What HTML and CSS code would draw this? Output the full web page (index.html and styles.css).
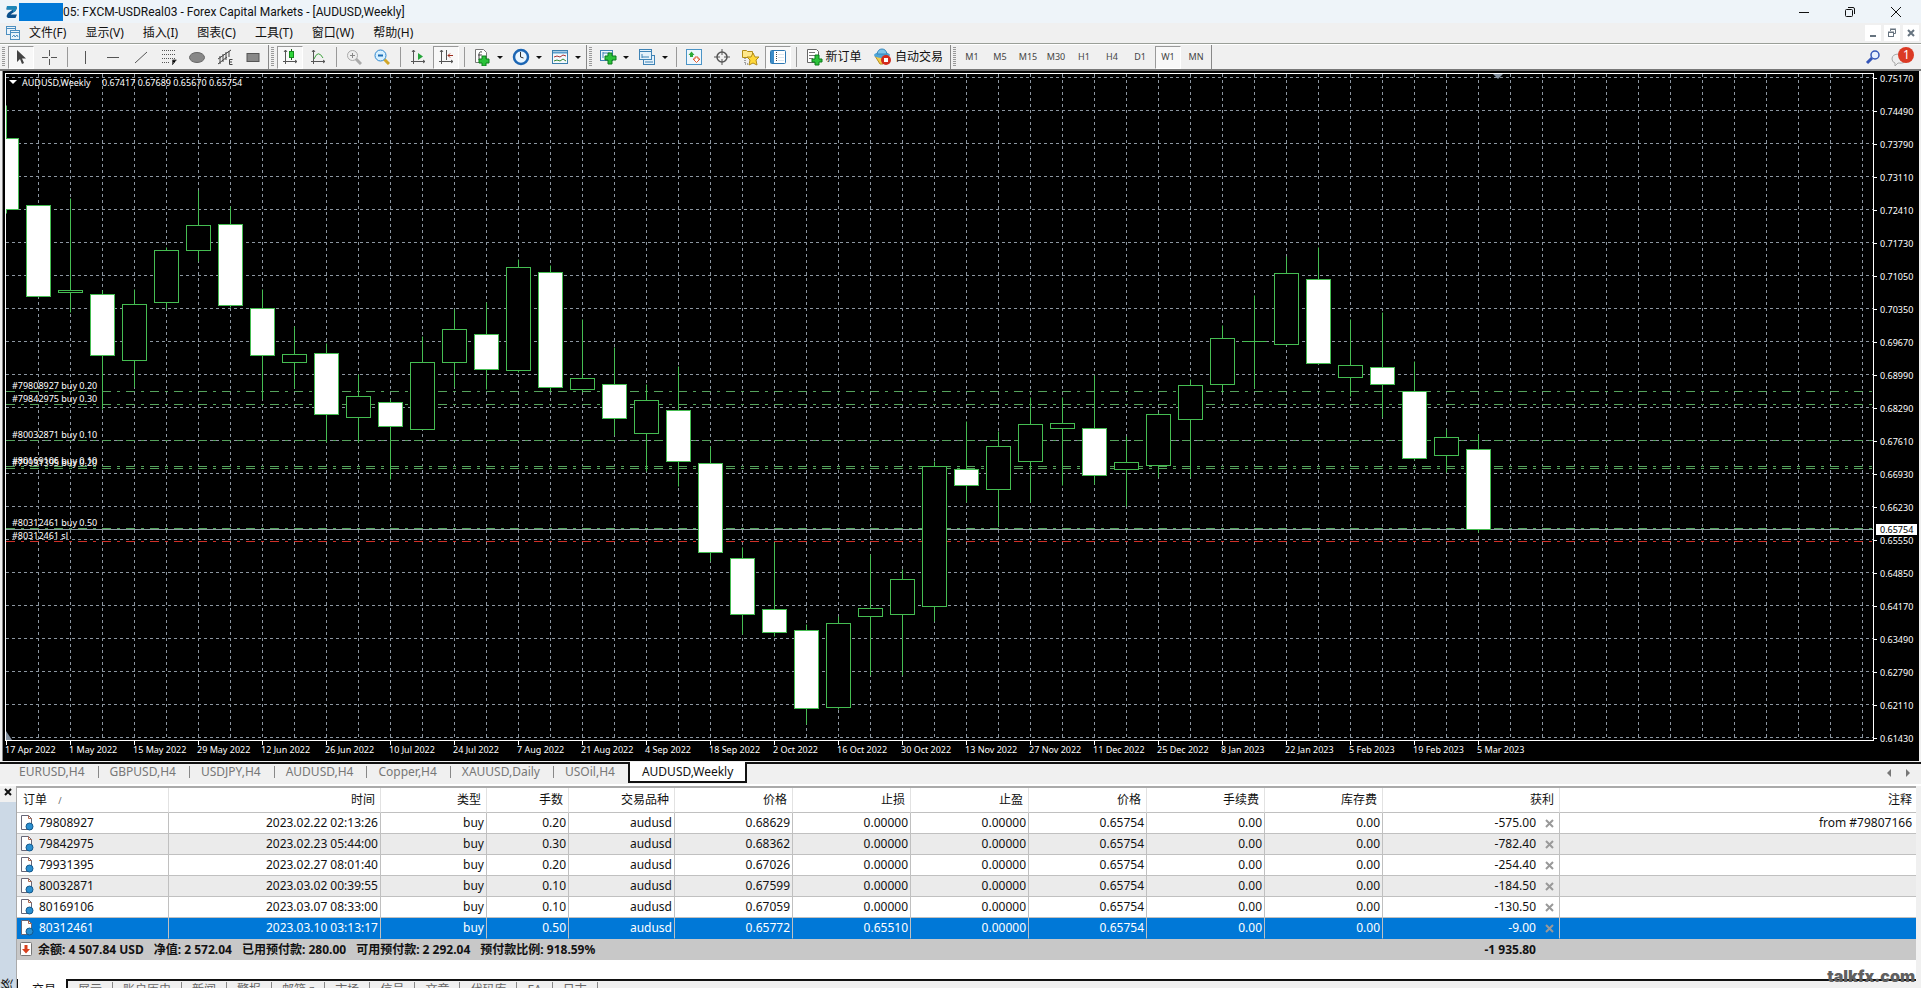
FILE: index.html
```html
<!DOCTYPE html>
<html lang="zh-CN">
<head>
<meta charset="utf-8">
<title>05: FXCM-USDReal03 - Forex Capital Markets - [AUDUSD,Weekly]</title>
<link rel="stylesheet" href="styles.css">
</head>
<body>
<header class="titlebar">
  <svg class="logo" width="12" height="14" viewBox="0 0 12 14"><path d="M1 1h8.500q1.800.3 1.300 2.400L9.500 6 4.500 9.500H11L9.500 13H2Q0 12.500.8 10.300L2 8 7 4.500H.5z" fill="#0b4f8c"/><path d="M1 1h8.500q1.800.3 1.300 2.400L9.500 6 7 7.500V4.500H.5z" fill="#1d86b8"/></svg>
  <span class="redacted"></span>
  <h1 class="title">05: FXCM-USDReal03 - Forex Capital Markets - [AUDUSD,Weekly]</h1>
  <div class="wincontrols">
    <button aria-label="最小化"><svg width="12" height="12"><path d="M1 6.500h10" stroke="#111"/></svg></button>
    <button aria-label="还原"><svg width="12" height="12" fill="none" stroke="#111"><rect x="1.500" y="3.500" width="7" height="7" rx="1"/><path d="M4 1.500h5q1.500 0 1.500 1.500v5"/></svg></button>
    <button aria-label="关闭"><svg width="12" height="12" stroke="#111"><path d="M1 1l10 10M11 1L1 11"/></svg></button>
  </div>
</header>

<nav class="menubar">
  <svg class="menuicon" width="14" height="14" fill="#eaf4fb" stroke="#4d8fc0"><rect x=".5" y=".5" width="9" height="8"/><path d="M1 2.500h8"/><rect x="4.500" y="4.500" width="9" height="9"/><path d="M5 6.500h8M6 11l2-2 1 2 2-2 1 2" fill="none"/></svg>
  <button>文件(F)</button><button>显示(V)</button><button>插入(I)</button><button>图表(C)</button><button>工具(T)</button><button>窗口(W)</button><button>帮助(H)</button>
  <div class="mdi">
    <button aria-label="最小化图表"><svg width="10" height="10"><path d="M2 8h6" stroke="#66737f" stroke-width="2"/></svg></button>
    <button aria-label="还原图表"><svg width="10" height="10" fill="none" stroke="#66737f"><path d="M3.500 3V1.500h5v4H7M3 1h6" /><rect x="1.500" y="4.500" width="5" height="4"/><path d="M1 4h6"/></svg></button>
    <button aria-label="关闭图表"><svg width="10" height="10" stroke="#66737f" stroke-width="2"><path d="M2 2l6 6M8 2L2 8"/></svg></button>
  </div>
</nav>

<div class="toolbar">
  <i class="grip"></i>
  <button class="tool on" aria-label="光标"><svg width="16" height="16"><path d="M4 1v12l3-3 2 5 2-1-2-4.500h4z" fill="#444"/></svg></button>
  <button class="tool" aria-label="十字线"><svg width="16" height="16"><path d="M8.500 1v6M8.500 10v6M1 8.500h6M10 8.500h6" stroke="#555"/></svg></button>
  <i class="sep"></i>
  <button class="tool" aria-label="垂直线"><svg width="16" height="16"><path d="M8.500 2v13" stroke="#555"/></svg></button>
  <button class="tool" aria-label="水平线"><svg width="16" height="16"><path d="M2 8.500h12" stroke="#555"/></svg></button>
  <button class="tool" aria-label="趋势线"><svg width="16" height="16"><path d="M2 14L14 3" stroke="#555"/></svg></button>
  <button class="tool" aria-label="斐波纳契"><svg width="16" height="16" stroke="#555"><path d="M1 1.500h14M1 5.500h14M1 9.500h14M1 13.500h8" stroke-dasharray="1 1"/><path d="M11.500 16v-5h4M11 13.500h3"/></svg></button>
  <button class="tool" aria-label="椭圆"><svg width="16" height="16"><ellipse cx="8" cy="8.500" rx="7.500" ry="5" fill="#888" stroke="#666"/></svg></button>
  <button class="tool" aria-label="通道"><svg width="16" height="16" stroke="#444" fill="none"><path d="M1 10L14 1M1 15l9-7M3 7v8M6 5v8M9 3v8M12 2v6M15.500 10.500h-3v5h3M13 13h2"/></svg></button>
  <button class="tool" aria-label="矩形"><svg width="16" height="16"><rect x="2" y="4.500" width="12" height="8" fill="#888" stroke="#555"/></svg></button>
  <i class="bar"></i><i class="grip"></i>
  <button class="tool on" aria-label="蜡烛图"><svg width="16" height="16"><path d="M3.500 1v14M1 12.500h14M2 3l1.500-2L5 3M13 11l2 1.500-2 1.500" stroke="#555" fill="none"/><path d="M9.500 0v11" stroke="#165c16"/><rect x="7.500" y="2.500" width="4" height="6" fill="#2fd43a" stroke="#138a1b"/></svg></button>
  <button class="tool" aria-label="折线图"><svg width="16" height="16" fill="none"><path d="M3.500 1v14M1 12.500h14M2 3l1.500-2L5 3M13 11l2 1.500-2 1.500" stroke="#555"/><path d="M4 10Q8 0 13 9" stroke="#3da33d"/></svg></button>
  <i class="sep"></i>
  <button class="tool" aria-label="放大"><svg width="16" height="16" fill="none"><path d="M10 10l5 5" stroke="#aaa" stroke-width="3"/><circle cx="6.500" cy="6.500" r="5" fill="#eee" stroke="#aaa"/><path d="M4 6.500h5M6.500 4v5" stroke="#888"/></svg></button>
  <button class="tool" aria-label="缩小"><svg width="16" height="16" fill="none"><path d="M10 10l5 5" stroke="#d1a628" stroke-width="3"/><circle cx="6.500" cy="6.500" r="5.500" fill="#d7f0ff" stroke="#2d86cf"/><path d="M4 6.500h5" stroke="#1b6cb5" stroke-width="2"/></svg></button>
  <i class="sep"></i>
  <button class="tool" aria-label="自动滚动"><svg width="16" height="16"><path d="M3.500 1v14M1 12.500h14M2 3l1.500-2L5 3M13 11l2 1.500-2 1.500" stroke="#555" fill="none"/><path d="M8 4v7l5-3.500z" fill="#25a53a"/></svg></button>
  <button class="tool on" aria-label="图表平移"><svg width="16" height="16" fill="none"><path d="M3.500 1v14M1 12.500h14M2 3l1.500-2L5 3M13 11l2 1.500-2 1.500M8.500 1v10" stroke="#555"/><path d="M10 6.500h5M12 4.500l-2 2 2 2" stroke="#9c2b1b"/></svg></button>
  <i class="sep"></i>
  <button class="tool drop" aria-label="指标"><svg width="18" height="18"><path d="M2.500 1.500h8l3 3v10h-11z" fill="#fff" stroke="#777"/><path d="M9 4q-3-1-3 3v5M5 7h4" stroke="#444" fill="none"/><path d="M9 8h4v3h3v4h-3v3H9v-3H6v-4h3z" fill="#2bc23a" stroke="#0c7d1c"/></svg><b class="caret"></b></button>
  <button class="tool drop" aria-label="时间周期"><svg width="18" height="18"><circle cx="9" cy="9" r="7" fill="#eaf6ff" stroke="#1c66b4" stroke-width="2.500"/><path d="M8.500 4v5l3 1" stroke="#333" fill="none"/></svg><b class="caret"></b></button>
  <button class="tool drop" aria-label="模板"><svg width="18" height="18" fill="none"><rect x="1.500" y="2.500" width="15" height="13" fill="#f4f9fc" stroke="#3b7fae"/><path d="M2 4.500h14" stroke="#5b9dcb" stroke-width="2"/><path d="M3 9l3-1 3 1 3-2 3 1" stroke="#a33"/><path d="M3 13l3-1 3 1 3-2 3 2" stroke="#383"/></svg><b class="caret"></b></button>
  <i class="bar"></i><i class="grip"></i>
  <button class="tool drop" aria-label="新图表"><svg width="18" height="18"><rect x="1.500" y="2.500" width="12" height="10" fill="#eef7fd" stroke="#3f83b5"/><path d="M4 5h7M4 4v6" stroke="#3f83b5"/><path d="M9 5h4v3h4v4h-4v4H9v-4H6V8h3z" fill="#2bc23a" stroke="#0c7d1c"/></svg><b class="caret"></b></button>
  <button class="tool drop" aria-label="窗口排列"><svg width="18" height="18" fill="#e5f1fa" stroke="#3f83b5"><rect x="5.500" y="7.500" width="11" height="9"/><rect x="1.500" y="1.500" width="12" height="10"/><path d="M2 3.500h11M4 6v4M4 9h7M7 14h8"/></svg><b class="caret"></b></button>
  <i class="sep"></i>
  <button class="tool" aria-label="市场报价"><svg width="16" height="16"><rect x=".5" y=".5" width="15" height="15" fill="#eef7fd" stroke="#4b94c6"/><path d="M5.500 2.500L8.500 6H7v2H4V6H2.500z" fill="#2faa39"/><path d="M10.500 13.500L7 10h2V8h3v2h2z" fill="#fff" stroke="#e25a31"/></svg></button>
  <button class="tool" aria-label="数据窗口"><svg width="16" height="16" fill="none" stroke="#555"><circle cx="8" cy="8" r="5" stroke-width="1.500"/><path d="M8 0v6M8 10v6M0 8h6M10 8h6"/></svg></button>
  <button class="tool" aria-label="导航"><svg width="18" height="18" stroke="#b28c19"><path d="M1.500 2.500h4l1 1h5v6h-10z" fill="#ffe88a"/><path d="M4 10v6h3" stroke="#555" stroke-dasharray="1 1" fill="none"/><path d="M12 5l2 4h4l-3 3 1 5-4-2-4 2 1-5-3-3h4z" fill="#ffd83a"/></svg></button>
  <button class="tool on" aria-label="终端"><svg width="16" height="14"><rect x=".5" y=".5" width="15" height="13" rx="1" fill="#fff" stroke="#2d78b2"/><rect x="1" y="1" width="3" height="12" fill="#3c8cc8"/><path d="M6.500 2v10" stroke="#444" stroke-dasharray="1 1"/><path d="M8 4.500h6M8 7.500h6M8 10.500h6" stroke="#dbe6ee"/></svg></button>
  <i class="sep"></i>
  <button class="tool wide"><svg width="18" height="18"><path d="M2.500 1.500h9l2 2v11h-11z" fill="#fff" stroke="#666"/><path d="M4 4.500h6M4 7.500h6M4 10.500h4" stroke="#777"/><path d="M10 7h4v4h3v3h-3v3h-4v-3H7v-3h3z" fill="#2bc23a" stroke="#0c7d1c"/></svg>新订单</button>
  <button class="tool wide auto"><svg width="18" height="18"><path d="M2 8h13l-5 8H7z" fill="#f2cd4c" stroke="#b48e21"/><ellipse cx="9" cy="7" rx="8" ry="3" fill="#4ea5d8"/><path d="M4 6q1-5 5-5t5 5z" fill="#7cc5ec" stroke="#3988ba"/><circle cx="13" cy="12" r="5" fill="#d32b1c"/><rect x="11" y="10" width="4" height="4" fill="#fff"/></svg>自动交易</button>
  <i class="bar"></i><i class="grip"></i>
  <button class="tool">M1</button><button class="tool">M5</button><button class="tool">M15</button><button class="tool">M30</button><button class="tool">H1</button><button class="tool">H4</button><button class="tool">D1</button><button class="tool on">W1</button><button class="tool">MN</button>
  <i class="bar"></i>
  <div class="tools-right">
    <button class="tool" aria-label="搜索"><svg width="16" height="16" fill="none"><path d="M2 14l5-5" stroke="#3556b8" stroke-width="3"/><circle cx="10" cy="6" r="4" fill="#e8f0ff" stroke="#3556b8" stroke-width="1.500"/></svg></button>
    <button class="tool" aria-label="消息"><svg width="24" height="22"><path d="M1 13q0-5 7-5t7 5-8 4l-3 3v-3q-3-1-3-4z" fill="#eee" stroke="#aaa"/><circle cx="15" cy="9" r="8" fill="#db3a25"/><text class="badge" x="12" y="13">1</text></svg></button>
  </div>
</div>

<main class="chart">
  <div class="plotrow">
    <svg class="plot" id="plot" role="img" aria-label="AUDUSD 周线蜡烛图"></svg>
    <div class="prices" id="prices"><output class="current">0.65754</output></div>
  </div>
  <div class="dates" id="dates"></div>
</main>

<nav class="charttabs">
  <a href="#">EURUSD,H4</a><a href="#">GBPUSD,H4</a><a href="#">USDJPY,H4</a><a href="#">AUDUSD,H4</a><a href="#">Copper,H4</a><a href="#">XAUUSD,Daily</a><a href="#">USOil,H4</a><a href="#" class="active">AUDUSD,Weekly</a>
  <div class="scrollers">
    <button aria-label="向左"><svg width="6" height="8"><path d="M5 0v8L1 4z" fill="#777"/></svg></button>
    <button aria-label="向右"><svg width="6" height="8"><path d="M1 0v8l4-4z" fill="#777"/></svg></button>
  </div>
</nav>

<section class="terminal">
  <aside class="side">
    <button aria-label="关闭终端"><svg width="8" height="8" stroke="#111" stroke-width="2"><path d="M1 1l6 6M7 1L1 7"/></svg></button>
    <div class="strip"><span>终端</span></div>
  </aside>
  <div class="panel">
    <table class="orders">
      <colgroup><col class="c-order"><col class="c-time"><col class="c-type"><col class="c-lots"><col class="c-sym"><col class="c-num"><col class="c-num"><col class="c-num"><col class="c-num"><col class="c-num"><col class="c-num"><col class="c-profit"><col></colgroup>
      <thead><tr><th>订单 <small>/</small></th><th>时间</th><th>类型</th><th>手数</th><th>交易品种</th><th>价格</th><th>止损</th><th>止盈</th><th>价格</th><th>手续费</th><th>库存费</th><th>获利</th><th>注释</th></tr></thead>
      <tbody id="rows"></tbody>
      <tfoot><tr><td colspan="11"><div class="sum"><svg width="13" height="15"><rect x=".5" y=".5" width="11" height="13" rx="1" fill="#fff" stroke="#777"/><path d="M4.500 3h3v4h2.500L6 11.500 2 7h2.500z" fill="#d8401e"/></svg><span>余额: 4 507.84 USD</span><span>净值: 2 572.04</span><span>已用预付款: 280.00</span><span>可用预付款: 2 292.04</span><span>预付款比例: 918.59%</span></div></td><td class="profit">-1 935.80</td><td></td></tr></tfoot>
    </table>
    <nav class="bottomtabs"><a href="#" class="active">交易</a><a href="#">展示</a><a href="#">账户历史</a><a href="#">新闻</a><a href="#">警报</a><a href="#">邮箱 <small>7</small></a><a href="#">市场</a><a href="#">信号</a><a href="#">文章</a><a href="#">代码库</a><a href="#">EA</a><a href="#">日志</a></nav>
    <div class="watermark">talkfx.com</div>
  </div>
</section>
<script src="app.js"></script>
</body>
</html>
```
FILE: styles.css
```css
* { box-sizing: border-box; }
body {
  margin: 0;
  height: 100vh;
  overflow: hidden;
  display: flex;
  flex-direction: column;
  background: #f0f0f0;
  color: #111;
  font: 12px/16px "Noto Sans", "Noto Sans CJK SC", sans-serif;
}
button { border: 0; padding: 0; margin: 0; background: none; font: inherit; color: inherit; }
a { color: inherit; text-decoration: none; }
svg { display: block; flex: none; }

.titlebar { flex: none; display: flex; align-items: center; height: 23px; padding: 0 2px 0 6px; background: #eef4f9; }
.logo { margin-right: 1px; }
.redacted { width: 44px; height: 18px; background: #0078d7; }
.title { margin: 0; font-size: 12px; font-weight: 400; font-family: Roboto, sans-serif; white-space: nowrap; }
.wincontrols { margin-left: auto; display: flex; }
.wincontrols button { width: 46px; height: 20px; display: grid; place-items: center; }

.menubar { flex: none; display: flex; align-items: center; height: 21px; padding: 0 2px 0 6px; border-bottom: 1px solid #9a9f98; }
.menuicon { margin-right: 9px; }
.menubar > button { margin-right: 19px; white-space: nowrap; }
.mdi { margin-left: auto; display: flex; gap: 3px; }
.mdi button { width: 16px; height: 16px; background: #fff; display: grid; place-items: center; }

.toolbar { flex: none; display: flex; align-items: center; height: 27px; padding-right: 4px; border-top: 1px solid #fff; border-bottom: 2px solid #777; }
.tool { flex: none; width: 26px; height: 23px; margin: 0 1px; display: flex; align-items: center; justify-content: center; font-size: 9px; color: #444; }
.tool.on { background: #f8f8f8; border: 1px solid #fff; border-top-color: #999; border-left-color: #999; }
.tool.drop { width: 37px; gap: 6px; }
.tool.wide { width: 65px; gap: 2px; font-size: 12px; color: #111; white-space: nowrap; }
.tool.auto { width: 80px; gap: 4px; }
.caret { width: 0; border: 3px solid transparent; border-top-color: #111; border-bottom: 0; }
.sep { flex: none; width: 1px; height: 20px; margin: 0 3px 0 4px; background: #999; }
.bar { flex: none; width: 1px; height: 24px; margin-left: 1px; background: #888; }
.grip { flex: none; width: 3px; height: 20px; margin: 0 2px; background: repeating-linear-gradient(#999 0 1px, #f0f0f0 1px 2px); }
.tools-right { margin-left: auto; display: flex; gap: 2px; }
.badge { font: 12px "Noto Sans", sans-serif; fill: #fff; }

.chart { flex: none; margin: 0 2px; padding: 2px 0 0 2px; border-left: 1px solid #888; background: #000; color: #fff; font-size: 9px; line-height: 11px; }
.plotrow { display: flex; height: 668px; }
.plot { flex: 1; min-width: 0; height: 668px; border: 1px solid #fff; }
.plot text { font: 9px "Noto Sans", sans-serif; fill: #fff; }
.grid { stroke: #8c96a0; stroke-dasharray: 3 3; }
.buy { stroke: #55a35c; stroke-dasharray: 9 6 3 6; }
.stop { stroke: #d03028; stroke-dasharray: 9 6 3 6; }
.bid { stroke: #8fa3a6; }
.wick { stroke: #45bd52; }
.up { fill: #000; stroke: #45bd52; }
.down { fill: #fff; stroke: #45bd52; }
.prices { position: relative; flex: none; width: 45px; }
.prices div { height: 33px; padding-bottom: 22px; display: flex; gap: 3px; align-items: center; }
.prices div::before { content: ""; width: 3px; height: 1px; background: #fff; }
.current { position: absolute; left: 2px; top: 451px; width: 41px; padding-left: 4px; background: #fff; color: #000; z-index: 1; }
.dates { display: flex; height: 20px; }
.dates span { flex: none; width: 64px; padding-top: 3px; white-space: nowrap; background: linear-gradient(#fff, #fff) 1px 0 / 1px 4px no-repeat; }

.charttabs { flex: none; display: flex; height: 24px; padding: 0 10px 3px 8px; margin-top: 1px; border-top: 2px solid #111; border-bottom: 2px solid #fff; color: #777; }
.charttabs a { padding-left: 11px; white-space: nowrap; height: 18px; }
.charttabs a:not(.active)::after { content: ""; display: inline-block; width: 1px; height: 12px; margin-left: 13px; background: #888; vertical-align: -2px; }
.charttabs a:nth-child(7)::after { width: 0; }
.charttabs a.active { margin-top: -2px; height: 21px; padding: 2px 12px 0; background: #fff; color: #111; border: solid #111; border-width: 0 2px 2px; }
.scrollers { margin-left: auto; display: flex; gap: 13px; align-items: center; }

.terminal { flex: 1; min-height: 0; display: flex; padding-right: 5px; }
.side { flex: none; width: 16px; display: flex; flex-direction: column; }
.side button { padding: 2px 0 6px 4px; }
.strip { flex: 1; padding-top: 176px; background: #ccd9e6; overflow: hidden; }
.strip span { display: block; writing-mode: vertical-rl; transform: rotate(180deg); text-orientation: sideways; }
.panel { position: relative; flex: 1; min-width: 0; background: #fff; border-top: 2px solid #aaa; border-left: 1px solid #aaa; }
.orders { width: 100%; table-layout: fixed; border-collapse: separate; border-spacing: 0; }
.c-order { width: 152px; } .c-time { width: 212px; } .c-type { width: 106px; } .c-lots { width: 82px; }
.c-sym { width: 106px; } .c-num { width: 118px; } .c-profit { width: 177px; }
.orders th { height: 25px; padding: 0 5px 0 0; text-align: right; font-weight: 400; border-right: 1px solid #e2e2e2; border-bottom: 1px solid #c0c0c0; }
.orders th:first-child { text-align: left; padding-left: 6px; }
.orders small { margin-left: 8px; font-size: 9px; color: #666; }
.orders td { height: 21px; padding: 0 2px 0 0; text-align: right; border-right: 1px solid #c0c0c0; border-bottom: 1px solid #c0c0c0; white-space: nowrap; }
.orders td:last-child, .orders th:last-child { padding-right: 4px; border-right: 0; }
.orders tbody tr:nth-child(even) { background: #ebebeb; }
.orders tbody tr.selected { background: #0078d7; color: #fff; }
.orders tbody tr.selected td { border-bottom-color: #0078d7; }
.order, .sum { display: flex; align-items: center; gap: 5px; padding-left: 3px; }
.gain { display: flex; justify-content: flex-end; align-items: center; gap: 9px; padding-right: 3px; }
.orders tfoot td { background: #c8c8c8; border: 0; font-weight: 700; }
.sum span { margin-right: 5px; }
.orders td.profit { padding-right: 24px; }
.bottomtabs { display: flex; margin-top: 19px; height: 24px; border-top: 2px solid #111; background: #f0f0f0; color: #666; }
.bottomtabs a { flex: none; padding: 1px 0 0 10px; white-space: nowrap; }
.bottomtabs a:not(.active)::after { content: ""; display: inline-block; width: 1px; height: 14px; margin-left: 10px; background: #888; vertical-align: -2px; }
.bottomtabs small { font-size: 9px; }
.bottomtabs a.active { margin-top: -2px; padding: 3px 10px 0 14px; background: #fff; color: #111; border-right: 2px solid #111; border-left: 1px solid #111; }
.watermark { position: absolute; right: 1px; top: 178px; font: 900 16px/20px Inter, sans-serif; color: #606060; }
```
FILE: app.js
```js
const ORIGIN_X = 6, ORIGIN_Y = 75, STEP_X = 32, STEP_Y = 33;

const candles = [
  [106,139,210,214,1],[206,206,297,298,1],[199,291,293,313,0],[291,295,356,410,1],
  [290,305,361,388,0],[248,251,303,309,0],[191,226,251,262,0],[207,225,306,308,1],
  [290,309,356,400,1],[327,355,363,389,0],[344,354,415,443,1],[375,397,418,443,0],
  [400,403,427,480,1],[337,363,430,430,0],[310,330,363,388,0],[303,335,370,390,1],
  [260,268,371,373,0],[266,273,388,392,1],[320,379,390,393,0],[348,385,419,436,1],
  [385,401,434,472,0],[367,411,462,487,1],[447,464,553,562,1],[548,559,615,635,1],
  [543,610,633,637,1],[625,631,709,725,1],[617,624,708,710,0],[555,609,617,676,0],
  [570,580,615,676,0],[462,467,607,622,0],[422,470,486,503,1],[432,447,490,527,0],
  [398,425,462,503,0],[398,424,429,486,0],[376,429,476,485,1],[437,463,470,507,0],
  [413,415,466,478,0],[380,386,420,478,0],[326,339,385,393,0],[296,342,342,389,0],
  [257,274,345,346,0],[248,280,364,365,1],[320,366,378,397,0],[313,368,385,418,1],
  [362,392,459,461,1],[430,438,456,473,0],[435,450,530,533,1]
];
const levels = [
  [392,'buy','#79808927 buy 0.20'],[405,'buy','#79842975 buy 0.30'],[441,'buy','#80032871 buy 0.10'],
  [467,'buy','#80169106 buy 0.10'],[469,'buy','#79931395 buy 0.20'],[529,'buy','#80312461 buy 0.50'],
  [542,'stop','#80312461 sl']
];

const plot = document.getElementById('plot');
const px = x => x - ORIGIN_X + 0.5;
const py = y => y - ORIGIN_Y + 0.5;
let out = '';
for (let i = 0; i < 21; i++) {
  const y = py(78 + i * STEP_Y);
  out += `<line class="grid" x1="0" x2="100%" y1="${y}" y2="${y}"/>`;
}
const columns = Math.ceil(plot.clientWidth / STEP_X);
for (let i = 1; i < columns; i++) {
  const x = px(ORIGIN_X + i * STEP_X);
  out += `<line class="grid" y1="0" y2="100%" x1="${x}" x2="${x}"/>`;
}
for (const [y, kind] of levels) out += `<line class="${kind}" x1="0" x2="100%" y1="${py(y)}" y2="${py(y)}"/>`;
out += `<line class="bid" x1="0" x2="100%" y1="${py(530)}" y2="${py(530)}"/>`;
candles.forEach(([high, top, bottom, low, down], i) => {
  const x = px(ORIGIN_X + i * STEP_X);
  out += `<line class="wick" x1="${x}" x2="${x}" y1="${py(high)}" y2="${py(low)}"/>`;
  out += `<rect class="${down ? 'down' : 'up'}" x="${x - 12}" y="${py(top)}" width="24" height="${bottom - top}"/>`;
  if (top === bottom) out += `<line class="wick" x1="${x - 12}" x2="${x + 12}" y1="${py(top)}" y2="${py(top)}"/>`;
});
for (const [y, , label] of levels) out += `<text x="6" y="${y - ORIGIN_Y - 2}">${label}</text>`;
out += `<path d="M3 6h8l-4 4z" fill="#fff"/><text x="16" y="12">AUDUSD,Weekly</text><text x="96" y="12">0.67417 0.67689 0.65670 0.65754</text>`;
out += `<path d="M1487 0h10l-5 5z" fill="#8491a0"/><path d="M0 657v9h6z" fill="#8491a0"/>`;
plot.innerHTML = out;

const prices = ['0.75170','0.74490','0.73790','0.73110','0.72410','0.71730','0.71050','0.70350','0.69670','0.68990','0.68290','0.67610','0.66930','0.66230','0.65550','0.64850','0.64170','0.63490','0.62790','0.62110','0.61430'];
document.getElementById('prices').insertAdjacentHTML('afterbegin', prices.map(p => `<div>${p}</div>`).join(''));

const dates = ['17 Apr 2022','1 May 2022','15 May 2022','29 May 2022','12 Jun 2022','26 Jun 2022','10 Jul 2022','24 Jul 2022','7 Aug 2022','21 Aug 2022','4 Sep 2022','18 Sep 2022','2 Oct 2022','16 Oct 2022','30 Oct 2022','13 Nov 2022','27 Nov 2022','11 Dec 2022','25 Dec 2022','8 Jan 2023','22 Jan 2023','5 Feb 2023','19 Feb 2023','5 Mar 2023'];
document.getElementById('dates').innerHTML = dates.map(d => `<span>${d}</span>`).join('');

const orders = [
  ['79808927','2023.02.22 02:13:26','0.20','0.68629','0.00000','-575.00','from #79807166'],
  ['79842975','2023.02.23 05:44:00','0.30','0.68362','0.00000','-782.40',''],
  ['79931395','2023.02.27 08:01:40','0.20','0.67026','0.00000','-254.40',''],
  ['80032871','2023.03.02 00:39:55','0.10','0.67599','0.00000','-184.50',''],
  ['80169106','2023.03.07 08:33:00','0.10','0.67059','0.00000','-130.50',''],
  ['80312461','2023.03.10 03:13:17','0.50','0.65772','0.65510','-9.00','']
];
const docIcon = '<svg width="14" height="16"><path d="M1.500.5h7l3 3v11h-10z" fill="#fff" stroke="#667"/><path d="M8.500.5v3h3" fill="none" stroke="#b06a50"/><circle cx="9.500" cy="11.500" r="3.500" fill="#2b8fd0" stroke="#14598c"/></svg>';
const closeIcon = '<svg width="9" height="9" stroke="#999" stroke-width="2"><path d="M1 1l7 7M8 1L1 8"/></svg>';
document.getElementById('rows').innerHTML = orders.map(([id, time, lots, open, sl, profit, note], i) =>
  `<tr class="${i === 5 ? 'selected' : ''}"><td><div class="order">${docIcon}${id}</div></td><td>${time}</td><td>buy</td><td>${lots}</td><td>audusd</td><td>${open}</td><td>${sl}</td><td>0.00000</td><td>0.65754</td><td>0.00</td><td>0.00</td><td><div class="gain">${profit}<button aria-label="平仓 ${id}">${closeIcon}</button></div></td><td>${note}</td></tr>`).join('');
```
